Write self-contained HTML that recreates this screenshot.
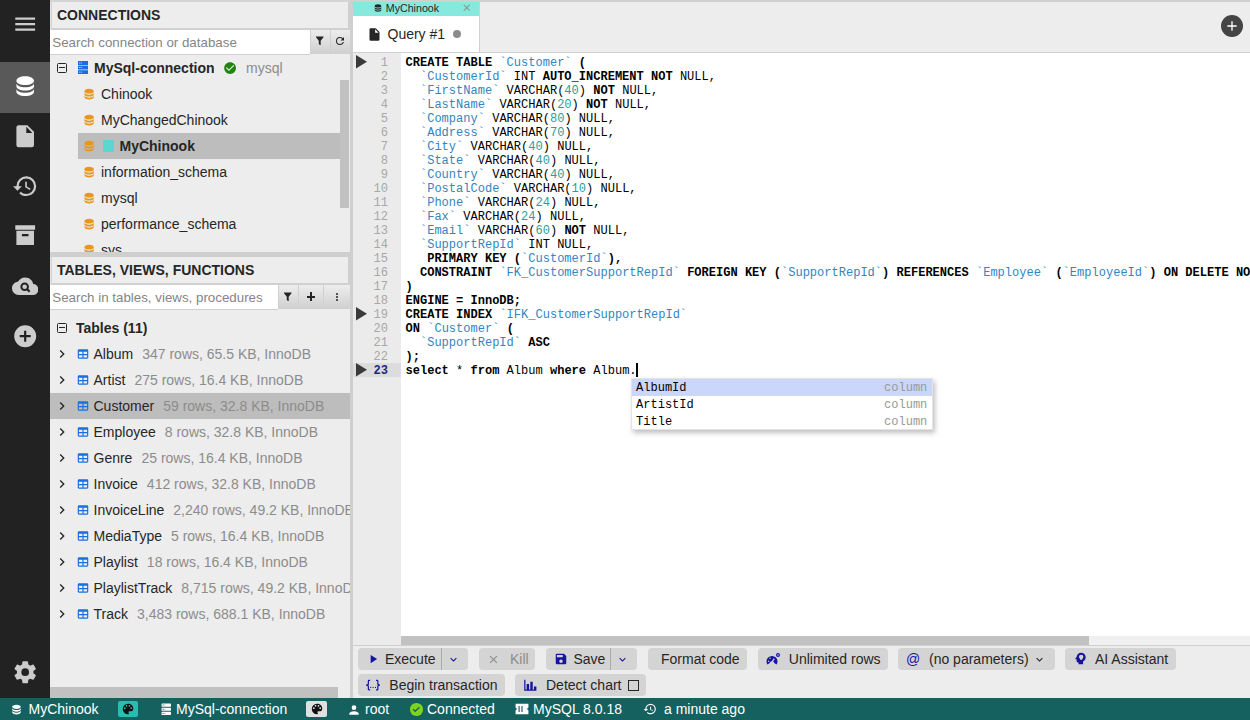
<!DOCTYPE html>
<html><head><meta charset="utf-8"><style>*{box-sizing:border-box}
html,body{margin:0;padding:0}
body{width:1250px;height:720px;overflow:hidden;position:relative;font-family:"Liberation Sans",sans-serif;font-size:14px;color:#262626;background:#ededed}
.abs{position:absolute}
.t{position:absolute;white-space:nowrap;line-height:16px}
.b{font-weight:bold}
.gray{color:#8c8c8c}
.code{position:absolute;font-family:"Liberation Mono",monospace;font-size:12.04px;line-height:14px;white-space:pre;color:#000}
.kw{font-weight:bold;color:#000}
.id{color:#3384c0}
.num{color:#2a9d9d}
.tbtn{position:absolute;height:22px;background:#d4d4d4;border-radius:4px}
</style></head><body>
<div class="abs" style="left:0;top:0;width:50px;height:698px;background:#222">
<div class="abs" style="left:0;top:62px;width:50px;height:50.5px;background:#595959"></div>
<svg class="abs" style="left:11.8px;top:10.6px" width="26.4" height="26.4" viewBox="0 0 24 24"><path fill="#cccccc" d="M3,6H21V8H3V6M3,11H21V13H3V11M3,16H21V18H3V16Z"/></svg>
<svg class="abs" style="left:11.8px;top:72.5px" width="26.4" height="26.4" viewBox="0 0 24 24"><path fill="#fff" d="M12,3C7.58,3 4,4.79 4,7C4,9.21 7.58,11 12,11C16.42,11 20,9.21 20,7C20,4.79 16.42,3 12,3M4,9V12C4,14.21 7.58,16 12,16C16.42,16 20,14.21 20,12V9C20,11.21 16.42,13 12,13C7.58,13 4,11.21 4,9M4,14V17C4,19.21 7.58,21 12,21C16.42,21 20,19.21 20,17V14C20,16.21 16.42,18 12,18C7.58,18 4,16.21 4,14Z"/></svg>
<svg class="abs" style="left:11.8px;top:122.8px" width="26.4" height="26.4" viewBox="0 0 24 24"><path fill="#cccccc" d="M13,9V3.5L18.5,9M6,2C4.89,2 4,2.89 4,4V20A2,2 0 0,0 6,22H18A2,2 0 0,0 20,20V8L14,2H6Z"/></svg>
<svg class="abs" style="left:11.8px;top:172.8px" width="26.4" height="26.4" viewBox="0 0 24 24"><path fill="#cccccc" d="M13.5,8H12V13L16.28,15.54L17,14.33L13.5,12.25V8M13,3A9,9 0 0,0 4,12H1L4.96,16.03L9,12H6A7,7 0 0,1 13,5A7,7 0 0,1 20,12A7,7 0 0,1 13,19C11.07,19 9.32,18.21 8.06,16.94L6.64,18.36C8.27,20 10.5,21 13,21A9,9 0 0,0 22,12A9,9 0 0,0 13,3"/></svg>
<svg class="abs" style="left:11.8px;top:222.2px" width="26.4" height="26.4" viewBox="0 0 24 24"><path fill="#cccccc" d="M3,3H21V7H3V3M4,8H20V21H4V8M9,11V13H15V11H9Z"/></svg>
<svg class="abs" style="left:11.8px;top:272.8px" width="26.4" height="26.4" viewBox="0 0 24 24"><path fill="#cccccc" d="M19.35,10.03C18.67,6.59 15.64,4 12,4C9.11,4 6.6,5.64 5.35,8.03C2.34,8.36 0,10.9 0,14A6,6 0 0,0 6,20H19A5,5 0 0,0 24,15C24,12.36 21.95,10.22 19.35,10.03Z"/><circle cx="11.5" cy="12.5" r="3" fill="none" stroke="#222" stroke-width="1.8"/><path d="M13.6 14.6L16 17" stroke="#222" stroke-width="2"/></svg>
<svg class="abs" style="left:11.8px;top:322.8px" width="26.4" height="26.4" viewBox="0 0 24 24"><path fill="#cccccc" d="M17,13H13V17H11V13H7V11H11V7H13V11H17M12,2A10,10 0 0,0 2,12A10,10 0 0,0 12,22A10,10 0 0,0 22,12A10,10 0 0,0 12,2Z"/></svg>
<svg class="abs" style="left:11.8px;top:658.8px" width="26.4" height="26.4" viewBox="0 0 24 24"><path fill="#cccccc" d="M12,15.5A3.5,3.5 0 0,1 8.5,12A3.5,3.5 0 0,1 12,8.5A3.5,3.5 0 0,1 15.5,12A3.5,3.5 0 0,1 12,15.5M19.43,12.97C19.47,12.65 19.5,12.33 19.5,12C19.5,11.67 19.47,11.34 19.43,11L21.54,9.37C21.73,9.22 21.78,8.95 21.66,8.73L19.66,5.27C19.54,5.05 19.27,4.96 19.05,5.05L16.56,6.05C16.04,5.66 15.5,5.32 14.87,5.07L14.5,2.42C14.46,2.18 14.25,2 14,2H10C9.75,2 9.54,2.18 9.5,2.42L9.13,5.07C8.5,5.32 7.96,5.66 7.44,6.05L4.95,5.05C4.73,4.96 4.46,5.05 4.34,5.27L2.34,8.73C2.21,8.95 2.27,9.22 2.46,9.37L4.57,11C4.53,11.34 4.5,11.67 4.5,12C4.5,12.33 4.53,12.65 4.57,12.97L2.46,14.63C2.27,14.78 2.21,15.05 2.34,15.27L4.34,18.73C4.46,18.95 4.73,19.03 4.95,18.95L7.44,17.94C7.96,18.34 8.5,18.68 9.13,18.93L9.5,21.58C9.54,21.82 9.75,22 10,22H14C14.25,22 14.46,21.82 14.5,21.58L14.87,18.93C15.5,18.67 16.04,18.34 16.56,17.94L19.05,18.95C19.27,19.03 19.54,18.95 19.66,18.73L21.66,15.27C21.78,15.05 21.73,14.78 21.54,14.63L19.43,12.97Z"/></svg>
</div>
<div class="abs" style="left:50px;top:0;width:300px;height:698px;background:#ededed;overflow:hidden">
<div class="abs" style="left:0;top:0;width:300px;height:2px;background:#d4d4d4"></div>
<div class="abs" style="left:0;top:2px;width:1px;height:28px;background:#e4e4e4"></div>
<div class="abs" style="left:1px;top:2px;width:299px;height:28px;background:#ededed;border-left:1px solid #d4d4d4;border-right:2px solid #cfcfcf;border-bottom:2px solid #d0d0d0"></div>
<div class="t b" style="left:7px;top:7.4px;color:#262626">CONNECTIONS</div>
<div class="abs" style="left:0;top:30px;width:260px;height:25px;background:#fff;border-bottom:1px solid #d0d0d0"></div>
<div class="t" style="left:2.299999999999997px;top:35.4px;color:#858585;font-size:13.33px">Search connection or database</div>
<div class="abs" style="left:260px;top:30px;width:20px;height:24px;background:linear-gradient(#ededed,#cfcfcf);border-left:1px solid #d0d0d0"></div>
<div class="abs" style="left:280px;top:30px;width:20px;height:24px;background:linear-gradient(#ededed,#cfcfcf);border-left:1px solid #d0d0d0"></div>
<svg class="abs" style="left:264.4px;top:35.2px" width="11.5" height="11.5" viewBox="0 0 24 24"><path fill="#262626" d="M14,12V19.88C14.04,20.18 13.94,20.5 13.71,20.71C13.32,21.1 12.69,21.1 12.3,20.71L10.29,18.7C10.06,18.47 9.96,18.16 10,17.87V12H9.97L4.21,4.62C3.87,4.19 3.95,3.56 4.38,3.22C4.57,3.08 4.78,3 5,3H19C19.22,3 19.43,3.08 19.62,3.22C20.05,3.56 20.13,4.19 19.79,4.62L14.03,12H14Z"/></svg>
<svg class="abs" style="left:283.8px;top:34.8px" width="12.0" height="12.0" viewBox="0 0 24 24"><path fill="#262626" d="M17.65,6.35C16.2,4.9 14.21,4 12,4A8,8 0 0,0 4,12A8,8 0 0,0 12,20C15.73,20 18.84,17.45 19.73,14H17.65C16.83,16.33 14.61,18 12,18A6,6 0 0,1 6,12A6,6 0 0,1 12,6C13.66,6 15.14,6.69 16.22,7.78L13,11H20V4L17.65,6.35Z"/></svg>
<div class="abs" style="left:7px;top:62.6px;width:10.4px;height:10.4px;border:1.3px solid #262626;border-radius:1.5px"></div><div class="abs" style="left:9.200000000000003px;top:67.2px;width:6px;height:1.3px;background:#262626"></div>
<svg class="abs" style="left:27.900000000000006px;top:61px" width="10.2" height="13.2" viewBox="0 0 10.2 13.2"><rect x="0" y="0" width="10.2" height="4" fill="#1a6fe0"/><rect x="0" y="4.6" width="10.2" height="3.9" fill="#1a6fe0"/><rect x="0" y="9.2" width="10.2" height="4" fill="#1a6fe0"/><rect x="1.2" y="1.5" width="1" height="1" fill="#cde"/><rect x="2.8" y="1.5" width="1" height="1" fill="#cde"/><rect x="1.2" y="6" width="1" height="1" fill="#cde"/><rect x="2.8" y="6" width="1" height="1" fill="#cde"/><rect x="1.2" y="10.7" width="1" height="1" fill="#cde"/><rect x="2.8" y="10.7" width="1" height="1" fill="#cde"/></svg>
<div class="t b" style="left:44px;top:59.6px">MySql-connection</div>
<svg class="abs" style="left:172.8px;top:60.6px" width="14.2" height="14.2" viewBox="0 0 24 24"><path fill="#21850c" d="M12 2C6.5 2 2 6.5 2 12S6.5 22 12 22 22 17.5 22 12 17.5 2 12 2M10 17L5 12L6.41 10.59L10 14.17L17.59 6.58L19 8L10 17Z"/></svg>
<div class="t gray" style="left:196px;top:59.6px">mysql</div>
<div class="abs" style="left:28px;top:133px;width:262px;height:26px;background:#bdbdbd"></div>
<svg class="abs" style="left:32.4px;top:86.8px" width="14.25" height="14.25" viewBox="0 0 24 24"><path fill="#e8961f" d="M12,3C7.58,3 4,4.79 4,7C4,9.21 7.58,11 12,11C16.42,11 20,9.21 20,7C20,4.79 16.42,3 12,3M4,9V12C4,14.21 7.58,16 12,16C16.42,16 20,14.21 20,12V9C20,11.21 16.42,13 12,13C7.58,13 4,11.21 4,9M4,14V17C4,19.21 7.58,21 12,21C16.42,21 20,19.21 20,17V14C20,16.21 16.42,18 12,18C7.58,18 4,16.21 4,14Z"/></svg>
<div class="t" style="left:51px;top:85.6px">Chinook</div>
<svg class="abs" style="left:32.4px;top:112.8px" width="14.25" height="14.25" viewBox="0 0 24 24"><path fill="#e8961f" d="M12,3C7.58,3 4,4.79 4,7C4,9.21 7.58,11 12,11C16.42,11 20,9.21 20,7C20,4.79 16.42,3 12,3M4,9V12C4,14.21 7.58,16 12,16C16.42,16 20,14.21 20,12V9C20,11.21 16.42,13 12,13C7.58,13 4,11.21 4,9M4,14V17C4,19.21 7.58,21 12,21C16.42,21 20,19.21 20,17V14C20,16.21 16.42,18 12,18C7.58,18 4,16.21 4,14Z"/></svg>
<div class="t" style="left:51px;top:111.6px">MyChangedChinook</div>
<svg class="abs" style="left:32.4px;top:138.8px" width="14.25" height="14.25" viewBox="0 0 24 24"><path fill="#e8961f" d="M12,3C7.58,3 4,4.79 4,7C4,9.21 7.58,11 12,11C16.42,11 20,9.21 20,7C20,4.79 16.42,3 12,3M4,9V12C4,14.21 7.58,16 12,16C16.42,16 20,14.21 20,12V9C20,11.21 16.42,13 12,13C7.58,13 4,11.21 4,9M4,14V17C4,19.21 7.58,21 12,21C16.42,21 20,19.21 20,17V14C20,16.21 16.42,18 12,18C7.58,18 4,16.21 4,14Z"/></svg>
<div class="abs" style="left:53px;top:140px;width:11px;height:12px;background:#5ad8cf"></div>
<div class="t b" style="left:69.5px;top:137.6px">MyChinook</div>
<svg class="abs" style="left:32.4px;top:164.8px" width="14.25" height="14.25" viewBox="0 0 24 24"><path fill="#e8961f" d="M12,3C7.58,3 4,4.79 4,7C4,9.21 7.58,11 12,11C16.42,11 20,9.21 20,7C20,4.79 16.42,3 12,3M4,9V12C4,14.21 7.58,16 12,16C16.42,16 20,14.21 20,12V9C20,11.21 16.42,13 12,13C7.58,13 4,11.21 4,9M4,14V17C4,19.21 7.58,21 12,21C16.42,21 20,19.21 20,17V14C20,16.21 16.42,18 12,18C7.58,18 4,16.21 4,14Z"/></svg>
<div class="t" style="left:51px;top:163.6px">information_schema</div>
<svg class="abs" style="left:32.4px;top:190.8px" width="14.25" height="14.25" viewBox="0 0 24 24"><path fill="#e8961f" d="M12,3C7.58,3 4,4.79 4,7C4,9.21 7.58,11 12,11C16.42,11 20,9.21 20,7C20,4.79 16.42,3 12,3M4,9V12C4,14.21 7.58,16 12,16C16.42,16 20,14.21 20,12V9C20,11.21 16.42,13 12,13C7.58,13 4,11.21 4,9M4,14V17C4,19.21 7.58,21 12,21C16.42,21 20,19.21 20,17V14C20,16.21 16.42,18 12,18C7.58,18 4,16.21 4,14Z"/></svg>
<div class="t" style="left:51px;top:189.6px">mysql</div>
<svg class="abs" style="left:32.4px;top:216.8px" width="14.25" height="14.25" viewBox="0 0 24 24"><path fill="#e8961f" d="M12,3C7.58,3 4,4.79 4,7C4,9.21 7.58,11 12,11C16.42,11 20,9.21 20,7C20,4.79 16.42,3 12,3M4,9V12C4,14.21 7.58,16 12,16C16.42,16 20,14.21 20,12V9C20,11.21 16.42,13 12,13C7.58,13 4,11.21 4,9M4,14V17C4,19.21 7.58,21 12,21C16.42,21 20,19.21 20,17V14C20,16.21 16.42,18 12,18C7.58,18 4,16.21 4,14Z"/></svg>
<div class="t" style="left:51px;top:215.6px">performance_schema</div>
<svg class="abs" style="left:32.4px;top:242.8px" width="14.25" height="14.25" viewBox="0 0 24 24"><path fill="#e8961f" d="M12,3C7.58,3 4,4.79 4,7C4,9.21 7.58,11 12,11C16.42,11 20,9.21 20,7C20,4.79 16.42,3 12,3M4,9V12C4,14.21 7.58,16 12,16C16.42,16 20,14.21 20,12V9C20,11.21 16.42,13 12,13C7.58,13 4,11.21 4,9M4,14V17C4,19.21 7.58,21 12,21C16.42,21 20,19.21 20,17V14C20,16.21 16.42,18 12,18C7.58,18 4,16.21 4,14Z"/></svg>
<div class="t" style="left:51px;top:241.6px">sys</div>
<div class="abs" style="left:290px;top:80px;width:9px;height:128px;background:#c1c1c1"></div>
<div class="abs" style="left:0;top:252px;width:300px;height:5px;background:#cfcfcf"></div>
<div class="abs" style="left:0;top:257px;width:1px;height:28px;background:#e4e4e4"></div>
<div class="abs" style="left:1px;top:257px;width:299px;height:28px;background:#ededed;border-left:1px solid #d4d4d4;border-right:2px solid #cfcfcf;border-bottom:2px solid #d0d0d0"></div>
<div class="t b" style="left:7px;top:261.6px">TABLES, VIEWS, FUNCTIONS</div>
<div class="abs" style="left:0;top:285px;width:228px;height:25px;background:#fff;border-bottom:1px solid #d0d0d0"></div>
<div class="t" style="left:2.299999999999997px;top:290.4px;color:#858585;font-size:13.33px">Search in tables, views, procedures</div>
<div class="abs" style="left:228px;top:285px;width:20px;height:24px;background:linear-gradient(#ededed,#cfcfcf);border-left:1px solid #d0d0d0"></div>
<svg class="abs" style="left:232.2px;top:290.8px" width="11.5" height="11.5" viewBox="0 0 24 24"><path fill="#262626" d="M14,12V19.88C14.04,20.18 13.94,20.5 13.71,20.71C13.32,21.1 12.69,21.1 12.3,20.71L10.29,18.7C10.06,18.47 9.96,18.16 10,17.87V12H9.97L4.21,4.62C3.87,4.19 3.95,3.56 4.38,3.22C4.57,3.08 4.78,3 5,3H19C19.22,3 19.43,3.08 19.62,3.22C20.05,3.56 20.13,4.19 19.79,4.62L14.03,12H14Z"/></svg>
<div class="abs" style="left:248px;top:285px;width:25px;height:24px;background:linear-gradient(#ededed,#cfcfcf);border-left:1px solid #d0d0d0"></div>
<div class="abs" style="left:273px;top:285px;width:27px;height:24px;background:linear-gradient(#ededed,#cfcfcf);border-left:1px solid #d0d0d0"></div>
<svg class="abs" style="left:280.5px;top:290.5px" width="12.0" height="12.0" viewBox="0 0 24 24"><path fill="#262626" d="M12,16A2,2 0 0,1 14,18A2,2 0 0,1 12,20A2,2 0 0,1 10,18A2,2 0 0,1 12,16M12,10A2,2 0 0,1 14,12A2,2 0 0,1 12,14A2,2 0 0,1 10,12A2,2 0 0,1 12,10M12,4A2,2 0 0,1 14,6A2,2 0 0,1 12,8A2,2 0 0,1 10,6A2,2 0 0,1 12,4Z"/></svg>
<div class="abs" style="left:256.6px;top:295.7px;width:8.6px;height:2px;background:#262626"></div>
<div class="abs" style="left:259.9px;top:292.4px;width:2px;height:8.6px;background:#262626"></div>
<div class="abs" style="left:7px;top:322.6px;width:10.4px;height:10.4px;border:1.3px solid #262626;border-radius:1.5px"></div><div class="abs" style="left:9.200000000000003px;top:327.2px;width:6px;height:1.3px;background:#262626"></div>
<div class="t b" style="left:26px;top:319.6px">Tables (11)</div>
<div class="abs" style="left:0;top:393px;width:300px;height:26px;background:#bdbdbd"></div>
<svg class="abs" style="left:3.5px;top:346.0px" width="16.0" height="16.0" viewBox="0 0 24 24"><path fill="#262626" d="M8.59,16.58L13.17,12L8.59,7.41L10,6L16,12L10,18L8.59,16.58Z"/></svg>
<svg class="abs" style="left:25.9px;top:346.8px" width="14.0" height="14.0" viewBox="0 0 24 24"><path fill="#1a6fe0" d="M5,4H19A2,2 0 0,1 21,6V18A2,2 0 0,1 19,20H5A2,2 0 0,1 3,18V6A2,2 0 0,1 5,4M5,8V12H11V8H5M13,8V12H19V8H13M5,14V18H11V14H5M13,14V18H19V14H13Z"/></svg>
<div class="t" style="left:43.5px;top:345.6px">Album<span class="gray" style="margin-left:9px">347 rows, 65.5 KB, InnoDB</span></div>
<svg class="abs" style="left:3.5px;top:372.0px" width="16.0" height="16.0" viewBox="0 0 24 24"><path fill="#262626" d="M8.59,16.58L13.17,12L8.59,7.41L10,6L16,12L10,18L8.59,16.58Z"/></svg>
<svg class="abs" style="left:25.9px;top:372.8px" width="14.0" height="14.0" viewBox="0 0 24 24"><path fill="#1a6fe0" d="M5,4H19A2,2 0 0,1 21,6V18A2,2 0 0,1 19,20H5A2,2 0 0,1 3,18V6A2,2 0 0,1 5,4M5,8V12H11V8H5M13,8V12H19V8H13M5,14V18H11V14H5M13,14V18H19V14H13Z"/></svg>
<div class="t" style="left:43.5px;top:371.6px">Artist<span class="gray" style="margin-left:9px">275 rows, 16.4 KB, InnoDB</span></div>
<svg class="abs" style="left:3.5px;top:398.0px" width="16.0" height="16.0" viewBox="0 0 24 24"><path fill="#262626" d="M8.59,16.58L13.17,12L8.59,7.41L10,6L16,12L10,18L8.59,16.58Z"/></svg>
<svg class="abs" style="left:25.9px;top:398.8px" width="14.0" height="14.0" viewBox="0 0 24 24"><path fill="#1a6fe0" d="M5,4H19A2,2 0 0,1 21,6V18A2,2 0 0,1 19,20H5A2,2 0 0,1 3,18V6A2,2 0 0,1 5,4M5,8V12H11V8H5M13,8V12H19V8H13M5,14V18H11V14H5M13,14V18H19V14H13Z"/></svg>
<div class="t" style="left:43.5px;top:397.6px">Customer<span class="gray" style="margin-left:9px">59 rows, 32.8 KB, InnoDB</span></div>
<svg class="abs" style="left:3.5px;top:424.0px" width="16.0" height="16.0" viewBox="0 0 24 24"><path fill="#262626" d="M8.59,16.58L13.17,12L8.59,7.41L10,6L16,12L10,18L8.59,16.58Z"/></svg>
<svg class="abs" style="left:25.9px;top:424.8px" width="14.0" height="14.0" viewBox="0 0 24 24"><path fill="#1a6fe0" d="M5,4H19A2,2 0 0,1 21,6V18A2,2 0 0,1 19,20H5A2,2 0 0,1 3,18V6A2,2 0 0,1 5,4M5,8V12H11V8H5M13,8V12H19V8H13M5,14V18H11V14H5M13,14V18H19V14H13Z"/></svg>
<div class="t" style="left:43.5px;top:423.6px">Employee<span class="gray" style="margin-left:9px">8 rows, 32.8 KB, InnoDB</span></div>
<svg class="abs" style="left:3.5px;top:450.0px" width="16.0" height="16.0" viewBox="0 0 24 24"><path fill="#262626" d="M8.59,16.58L13.17,12L8.59,7.41L10,6L16,12L10,18L8.59,16.58Z"/></svg>
<svg class="abs" style="left:25.9px;top:450.8px" width="14.0" height="14.0" viewBox="0 0 24 24"><path fill="#1a6fe0" d="M5,4H19A2,2 0 0,1 21,6V18A2,2 0 0,1 19,20H5A2,2 0 0,1 3,18V6A2,2 0 0,1 5,4M5,8V12H11V8H5M13,8V12H19V8H13M5,14V18H11V14H5M13,14V18H19V14H13Z"/></svg>
<div class="t" style="left:43.5px;top:449.6px">Genre<span class="gray" style="margin-left:9px">25 rows, 16.4 KB, InnoDB</span></div>
<svg class="abs" style="left:3.5px;top:476.0px" width="16.0" height="16.0" viewBox="0 0 24 24"><path fill="#262626" d="M8.59,16.58L13.17,12L8.59,7.41L10,6L16,12L10,18L8.59,16.58Z"/></svg>
<svg class="abs" style="left:25.9px;top:476.8px" width="14.0" height="14.0" viewBox="0 0 24 24"><path fill="#1a6fe0" d="M5,4H19A2,2 0 0,1 21,6V18A2,2 0 0,1 19,20H5A2,2 0 0,1 3,18V6A2,2 0 0,1 5,4M5,8V12H11V8H5M13,8V12H19V8H13M5,14V18H11V14H5M13,14V18H19V14H13Z"/></svg>
<div class="t" style="left:43.5px;top:475.6px">Invoice<span class="gray" style="margin-left:9px">412 rows, 32.8 KB, InnoDB</span></div>
<svg class="abs" style="left:3.5px;top:502.0px" width="16.0" height="16.0" viewBox="0 0 24 24"><path fill="#262626" d="M8.59,16.58L13.17,12L8.59,7.41L10,6L16,12L10,18L8.59,16.58Z"/></svg>
<svg class="abs" style="left:25.9px;top:502.8px" width="14.0" height="14.0" viewBox="0 0 24 24"><path fill="#1a6fe0" d="M5,4H19A2,2 0 0,1 21,6V18A2,2 0 0,1 19,20H5A2,2 0 0,1 3,18V6A2,2 0 0,1 5,4M5,8V12H11V8H5M13,8V12H19V8H13M5,14V18H11V14H5M13,14V18H19V14H13Z"/></svg>
<div class="t" style="left:43.5px;top:501.6px">InvoiceLine<span class="gray" style="margin-left:9px">2,240 rows, 49.2 KB, InnoDB</span></div>
<svg class="abs" style="left:3.5px;top:528.0px" width="16.0" height="16.0" viewBox="0 0 24 24"><path fill="#262626" d="M8.59,16.58L13.17,12L8.59,7.41L10,6L16,12L10,18L8.59,16.58Z"/></svg>
<svg class="abs" style="left:25.9px;top:528.8px" width="14.0" height="14.0" viewBox="0 0 24 24"><path fill="#1a6fe0" d="M5,4H19A2,2 0 0,1 21,6V18A2,2 0 0,1 19,20H5A2,2 0 0,1 3,18V6A2,2 0 0,1 5,4M5,8V12H11V8H5M13,8V12H19V8H13M5,14V18H11V14H5M13,14V18H19V14H13Z"/></svg>
<div class="t" style="left:43.5px;top:527.6px">MediaType<span class="gray" style="margin-left:9px">5 rows, 16.4 KB, InnoDB</span></div>
<svg class="abs" style="left:3.5px;top:554.0px" width="16.0" height="16.0" viewBox="0 0 24 24"><path fill="#262626" d="M8.59,16.58L13.17,12L8.59,7.41L10,6L16,12L10,18L8.59,16.58Z"/></svg>
<svg class="abs" style="left:25.9px;top:554.8px" width="14.0" height="14.0" viewBox="0 0 24 24"><path fill="#1a6fe0" d="M5,4H19A2,2 0 0,1 21,6V18A2,2 0 0,1 19,20H5A2,2 0 0,1 3,18V6A2,2 0 0,1 5,4M5,8V12H11V8H5M13,8V12H19V8H13M5,14V18H11V14H5M13,14V18H19V14H13Z"/></svg>
<div class="t" style="left:43.5px;top:553.6px">Playlist<span class="gray" style="margin-left:9px">18 rows, 16.4 KB, InnoDB</span></div>
<svg class="abs" style="left:3.5px;top:580.0px" width="16.0" height="16.0" viewBox="0 0 24 24"><path fill="#262626" d="M8.59,16.58L13.17,12L8.59,7.41L10,6L16,12L10,18L8.59,16.58Z"/></svg>
<svg class="abs" style="left:25.9px;top:580.8px" width="14.0" height="14.0" viewBox="0 0 24 24"><path fill="#1a6fe0" d="M5,4H19A2,2 0 0,1 21,6V18A2,2 0 0,1 19,20H5A2,2 0 0,1 3,18V6A2,2 0 0,1 5,4M5,8V12H11V8H5M13,8V12H19V8H13M5,14V18H11V14H5M13,14V18H19V14H13Z"/></svg>
<div class="t" style="left:43.5px;top:579.6px">PlaylistTrack<span class="gray" style="margin-left:9px">8,715 rows, 49.2 KB, InnoDB</span></div>
<svg class="abs" style="left:3.5px;top:606.0px" width="16.0" height="16.0" viewBox="0 0 24 24"><path fill="#262626" d="M8.59,16.58L13.17,12L8.59,7.41L10,6L16,12L10,18L8.59,16.58Z"/></svg>
<svg class="abs" style="left:25.9px;top:606.8px" width="14.0" height="14.0" viewBox="0 0 24 24"><path fill="#1a6fe0" d="M5,4H19A2,2 0 0,1 21,6V18A2,2 0 0,1 19,20H5A2,2 0 0,1 3,18V6A2,2 0 0,1 5,4M5,8V12H11V8H5M13,8V12H19V8H13M5,14V18H11V14H5M13,14V18H19V14H13Z"/></svg>
<div class="t" style="left:43.5px;top:605.6px">Track<span class="gray" style="margin-left:9px">3,483 rows, 688.1 KB, InnoDB</span></div>
<div class="abs" style="left:0;top:687px;width:288px;height:11px;background:#c1c1c1"></div>
</div>
<div class="abs" style="left:350px;top:0;width:3px;height:698px;background:#cfcfcf"></div>
<div class="abs" style="left:353px;top:0;width:897px;height:53px;background:#ededed"></div>
<div class="abs" style="left:353px;top:0;width:897px;height:1.5px;background:#d0d0d0"></div>
<div class="abs" style="left:353px;top:2px;width:126px;height:14px;background:#87e8de"></div>
<svg class="abs" style="left:372.5px;top:3.0px" width="10.0" height="10.0" viewBox="0 0 24 24"><path fill="#262626" d="M12,3C7.58,3 4,4.79 4,7C4,9.21 7.58,11 12,11C16.42,11 20,9.21 20,7C20,4.79 16.42,3 12,3M4,9V12C4,14.21 7.58,16 12,16C16.42,16 20,14.21 20,12V9C20,11.21 16.42,13 12,13C7.58,13 4,11.21 4,9M4,14V17C4,19.21 7.58,21 12,21C16.42,21 20,19.21 20,17V14C20,16.21 16.42,18 12,18C7.58,18 4,16.21 4,14Z"/></svg>
<div class="t" style="left:385.8px;top:1px;font-size:10.67px;line-height:14px">MyChinook</div>
<svg class="abs" style="left:461.3px;top:1.9px" width="11.5" height="11.5" viewBox="0 0 24 24"><path fill="#8c8c8c" d="M19,6.41L17.59,5L12,10.59L6.41,5L5,6.41L10.59,12L5,17.59L6.41,19L12,13.41L17.59,19L19,17.59L13.41,12L19,6.41Z"/></svg>
<div class="abs" style="left:353px;top:16px;width:126px;height:36px;background:#fff"></div>
<div class="abs" style="left:479px;top:2px;width:1px;height:50px;background:#d0d0d0"></div>
<svg class="abs" style="left:367.0px;top:27.0px" width="15.0" height="15.0" viewBox="0 0 24 24"><path fill="#262626" d="M13,9V3.5L18.5,9M6,2C4.89,2 4,2.89 4,4V20A2,2 0 0,0 6,22H18A2,2 0 0,0 20,20V8L14,2H6Z"/></svg>
<div class="t" style="left:387.5px;top:25.5px">Query #1</div>
<div class="abs" style="left:452.5px;top:29.8px;width:8.5px;height:8.5px;border-radius:50%;background:#8c8c8c"></div>
<div class="abs" style="left:1221px;top:15px;width:22px;height:22px;border-radius:50%;background:#444"></div>
<svg class="abs" style="left:1224.0px;top:18.0px" width="16.0" height="16.0" viewBox="0 0 24 24"><path fill="#fff" d="M19,13H13V19H11V13H5V11H11V5H13V11H19V13Z"/></svg>
<div class="abs" style="left:353px;top:52px;width:897px;height:1px;background:#d0d0d0"></div>
<div class="abs" style="left:353px;top:53px;width:897px;height:592px;background:#fff"></div>
<div class="abs" style="left:353px;top:53px;width:48px;height:592px;background:#ebebeb"></div>
<div class="abs" style="left:353px;top:362.9px;width:48px;height:14px;background:#dcdcdc"></div>
<svg class="abs" style="left:356px;top:55.0px" width="12" height="14" viewBox="0 0 12 14"><path d="M0,0L11,6.8L0,13.6Z" fill="#3a3a3a"/></svg>
<svg class="abs" style="left:356px;top:307.0px" width="12" height="14" viewBox="0 0 12 14"><path d="M0,0L11,6.8L0,13.6Z" fill="#3a3a3a"/></svg>
<svg class="abs" style="left:356px;top:363.0px" width="12" height="14" viewBox="0 0 12 14"><path d="M0,0L11,6.8L0,13.6Z" fill="#3a3a3a"/></svg>
<div class="code" style="left:360px;top:55.9px;width:28px;text-align:right;color:#a8a8a8">1</div>
<div class="code" style="left:360px;top:69.9px;width:28px;text-align:right;color:#a8a8a8">2</div>
<div class="code" style="left:360px;top:83.9px;width:28px;text-align:right;color:#a8a8a8">3</div>
<div class="code" style="left:360px;top:97.9px;width:28px;text-align:right;color:#a8a8a8">4</div>
<div class="code" style="left:360px;top:111.9px;width:28px;text-align:right;color:#a8a8a8">5</div>
<div class="code" style="left:360px;top:125.9px;width:28px;text-align:right;color:#a8a8a8">6</div>
<div class="code" style="left:360px;top:139.9px;width:28px;text-align:right;color:#a8a8a8">7</div>
<div class="code" style="left:360px;top:153.9px;width:28px;text-align:right;color:#a8a8a8">8</div>
<div class="code" style="left:360px;top:167.9px;width:28px;text-align:right;color:#a8a8a8">9</div>
<div class="code" style="left:360px;top:181.9px;width:28px;text-align:right;color:#a8a8a8">10</div>
<div class="code" style="left:360px;top:195.9px;width:28px;text-align:right;color:#a8a8a8">11</div>
<div class="code" style="left:360px;top:209.9px;width:28px;text-align:right;color:#a8a8a8">12</div>
<div class="code" style="left:360px;top:223.9px;width:28px;text-align:right;color:#a8a8a8">13</div>
<div class="code" style="left:360px;top:237.9px;width:28px;text-align:right;color:#a8a8a8">14</div>
<div class="code" style="left:360px;top:251.9px;width:28px;text-align:right;color:#a8a8a8">15</div>
<div class="code" style="left:360px;top:265.9px;width:28px;text-align:right;color:#a8a8a8">16</div>
<div class="code" style="left:360px;top:279.9px;width:28px;text-align:right;color:#a8a8a8">17</div>
<div class="code" style="left:360px;top:293.9px;width:28px;text-align:right;color:#a8a8a8">18</div>
<div class="code" style="left:360px;top:307.9px;width:28px;text-align:right;color:#a8a8a8">19</div>
<div class="code" style="left:360px;top:321.9px;width:28px;text-align:right;color:#a8a8a8">20</div>
<div class="code" style="left:360px;top:335.9px;width:28px;text-align:right;color:#a8a8a8">21</div>
<div class="code" style="left:360px;top:349.9px;width:28px;text-align:right;color:#a8a8a8">22</div>
<div class="code" style="left:360px;top:363.9px;width:28px;text-align:right;color:#1c2a80;font-weight:bold">23</div>
<div class="abs" style="left:401px;top:53px;width:849px;height:583px;overflow:hidden">
<div class="code" style="left:4.5px;top:2.8999999999999986px"><span class="kw">CREATE TABLE</span> <span class="id">`Customer`</span> <span class="kw">(</span></div>
<div class="code" style="left:4.5px;top:16.9px">  <span class="id">`CustomerId`</span> INT <span class="kw">AUTO_INCREMENT NOT</span> NULL,</div>
<div class="code" style="left:4.5px;top:30.9px">  <span class="id">`FirstName`</span> VARCHAR(<span class="num">40</span>) <span class="kw">NOT</span> NULL,</div>
<div class="code" style="left:4.5px;top:44.9px">  <span class="id">`LastName`</span> VARCHAR(<span class="num">20</span>) <span class="kw">NOT</span> NULL,</div>
<div class="code" style="left:4.5px;top:58.9px">  <span class="id">`Company`</span> VARCHAR(<span class="num">80</span>) NULL,</div>
<div class="code" style="left:4.5px;top:72.9px">  <span class="id">`Address`</span> VARCHAR(<span class="num">70</span>) NULL,</div>
<div class="code" style="left:4.5px;top:86.9px">  <span class="id">`City`</span> VARCHAR(<span class="num">40</span>) NULL,</div>
<div class="code" style="left:4.5px;top:100.9px">  <span class="id">`State`</span> VARCHAR(<span class="num">40</span>) NULL,</div>
<div class="code" style="left:4.5px;top:114.9px">  <span class="id">`Country`</span> VARCHAR(<span class="num">40</span>) NULL,</div>
<div class="code" style="left:4.5px;top:128.9px">  <span class="id">`PostalCode`</span> VARCHAR(<span class="num">10</span>) NULL,</div>
<div class="code" style="left:4.5px;top:142.9px">  <span class="id">`Phone`</span> VARCHAR(<span class="num">24</span>) NULL,</div>
<div class="code" style="left:4.5px;top:156.9px">  <span class="id">`Fax`</span> VARCHAR(<span class="num">24</span>) NULL,</div>
<div class="code" style="left:4.5px;top:170.9px">  <span class="id">`Email`</span> VARCHAR(<span class="num">60</span>) <span class="kw">NOT</span> NULL,</div>
<div class="code" style="left:4.5px;top:184.9px">  <span class="id">`SupportRepId`</span> INT NULL,</div>
<div class="code" style="left:4.5px;top:198.9px">   <span class="kw">PRIMARY KEY (</span><span class="id">`CustomerId`</span><span class="kw">),</span></div>
<div class="code" style="left:4.5px;top:212.9px">  <span class="kw">CONSTRAINT</span> <span class="id">`FK_CustomerSupportRepId`</span> <span class="kw">FOREIGN KEY (</span><span class="id">`SupportRepId`</span><span class="kw">) REFERENCES</span> <span class="id">`Employee`</span> <span class="kw">(</span><span class="id">`EmployeeId`</span><span class="kw">) ON DELETE NO ACTION ON UPDATE NO ACTION</span></div>
<div class="code" style="left:4.5px;top:226.9px"><span class="kw">)</span></div>
<div class="code" style="left:4.5px;top:240.9px"><span class="kw">ENGINE = InnoDB;</span></div>
<div class="code" style="left:4.5px;top:254.9px"><span class="kw">CREATE INDEX</span> <span class="id">`IFK_CustomerSupportRepId`</span></div>
<div class="code" style="left:4.5px;top:268.9px"><span class="kw">ON</span> <span class="id">`Customer`</span> <span class="kw">(</span></div>
<div class="code" style="left:4.5px;top:282.9px">  <span class="id">`SupportRepId`</span> <span class="kw">ASC</span></div>
<div class="code" style="left:4.5px;top:296.9px"><span class="kw">);</span></div>
<div class="code" style="left:4.5px;top:310.9px"><span class="kw">select</span> * <span class="kw">from</span> Album <span class="kw">where</span> Album.</div>
</div>
<div class="abs" style="left:636px;top:363px;width:2px;height:14px;background:#000"></div>
<div class="abs" style="left:631px;top:378px;width:302px;height:52px;background:#fff;border:1px solid #e4e4e4;box-shadow:2px 3px 5px rgba(0,0,0,0.25)"></div>
<div class="abs" style="left:632px;top:379px;width:300px;height:16.5px;background:#cad6fa"></div>
<div class="code" style="left:636px;top:381px;color:#000">AlbumId</div>
<div class="code" style="left:884px;top:381px;color:#999">column</div>
<div class="code" style="left:636px;top:398px;color:#000">ArtistId</div>
<div class="code" style="left:884px;top:398px;color:#999">column</div>
<div class="code" style="left:636px;top:415px;color:#000">Title</div>
<div class="code" style="left:884px;top:415px;color:#999">column</div>
<div class="abs" style="left:401px;top:636px;width:849px;height:9px;background:#f0f0f0"></div>
<div class="abs" style="left:401px;top:636px;width:688px;height:9px;background:#c1c1c1"></div>
<div class="abs" style="left:353px;top:645px;width:897px;height:1px;background:#cfcfcf"></div>
<div class="tbtn" style="left:357.6px;top:648px;width:110.89999999999998px;height:22px;background:#d4d4d4;"></div>
<div class="abs" style="left:441px;top:648px;width:1px;height:22px;background:#aaa"></div>
<svg class="abs" style="left:366.0px;top:652.0px" width="14.0" height="14.0" viewBox="0 0 24 24"><path fill="#1414a0" d="M8,5.14V19.14L19,12.14L8,5.14Z"/></svg>
<div class="t" style="left:385px;top:651px;color:#262626">Execute</div>
<svg class="abs" style="left:447.0px;top:652.5px" width="13.0" height="13.0" viewBox="0 0 24 24"><path fill="#1414a0" d="M7.41,8.58L12,13.17L16.59,8.58L18,10L12,16L6,10L7.41,8.58Z"/></svg>
<div class="tbtn" style="left:479px;top:648px;width:56.39999999999998px;height:22px;background:#d4d4d4;"></div>
<svg class="abs" style="left:486.5px;top:652.5px" width="13.0" height="13.0" viewBox="0 0 24 24"><path fill="#8c8c8c" d="M19,6.41L17.59,5L12,10.59L6.41,5L5,6.41L10.59,12L5,17.59L6.41,19L12,13.41L17.59,19L19,17.59L13.41,12L19,6.41Z"/></svg>
<div class="t" style="left:510px;top:651px;color:#8c8c8c">Kill</div>
<div class="tbtn" style="left:546px;top:648px;width:91px;height:22px;background:#d4d4d4;"></div>
<div class="abs" style="left:610px;top:648px;width:1px;height:22px;background:#aaa"></div>
<svg class="abs" style="left:553.5px;top:652.0px" width="14.0" height="14.0" viewBox="0 0 24 24"><path fill="#1414a0" d="M15,9H5V5H15M12,19A3,3 0 0,1 9,16A3,3 0 0,1 12,13A3,3 0 0,1 15,16A3,3 0 0,1 12,19M17,3H5C3.89,3 3,3.9 3,5V19A2,2 0 0,0 5,21H19A2,2 0 0,0 21,19V7L17,3Z"/></svg>
<div class="t" style="left:573.5px;top:651px;color:#262626">Save</div>
<svg class="abs" style="left:616.0px;top:652.5px" width="13.0" height="13.0" viewBox="0 0 24 24"><path fill="#1414a0" d="M7.41,8.58L12,13.17L16.59,8.58L18,10L12,16L6,10L7.41,8.58Z"/></svg>
<div class="tbtn" style="left:648px;top:648px;width:99.39999999999998px;height:22px;background:#d4d4d4;"></div>
<div class="t" style="left:661px;top:651px;color:#262626">Format code</div>
<div class="tbtn" style="left:758px;top:648px;width:130px;height:22px;background:#d4d4d4;"></div>
<svg class="abs" style="left:766px;top:653.0px" width="14" height="12" viewBox="0 0 14 12"><path fill="#1414a0" d="M0.5,8.5A5.5,5.5 0 0,1 11.5,8.5C11.5,9.6 11.2,10.6 10.6,11.4L8.6,10.2A2.7,2.7 0 0,0 3.4,10.2L1.4,11.4C0.8,10.6 0.5,9.6 0.5,8.5Z"/><path d="M6,9.2L8.2,5.6" stroke="#d4d4d4" stroke-width="1.3"/><circle cx="2.6" cy="8.2" r="0.7" fill="#d4d4d4"/><circle cx="4" cy="5.2" r="0.7" fill="#d4d4d4"/><circle cx="12" cy="2" r="1.4" fill="none" stroke="#1414a0" stroke-width="1.2"/></svg>
<div class="t" style="left:788.8px;top:651px;color:#262626">Unlimited rows</div>
<div class="tbtn" style="left:898px;top:648px;width:156.79999999999995px;height:22px;background:#d4d4d4;"></div>
<div class="t" style="left:906px;top:651px;color:#1414a0">@</div>
<div class="t" style="left:929px;top:651px;color:#262626">(no parameters)</div>
<svg class="abs" style="left:1033.0px;top:652.5px" width="13.0" height="13.0" viewBox="0 0 24 24"><path fill="#262626" d="M7.41,8.58L12,13.17L16.59,8.58L18,10L12,16L6,10L7.41,8.58Z"/></svg>
<div class="tbtn" style="left:1065.2px;top:648px;width:110.59999999999991px;height:22px;background:#d4d4d4;"></div>
<svg class="abs" style="left:1073.5px;top:652.3px" width="13" height="13" viewBox="3 2 18 20"><path fill="#1414a0" d="M13,3C9.23,3 6.19,5.95 6,9.66L4.08,12.19C3.84,12.5 4.08,13 4.5,13H6V16A2,2 0 0,0 8,18H9V21H16V16.31C18.37,15.19 20,12.8 20,10C20,6.14 16.88,3 13,3Z"/><path fill="#d4d4d4" d="M13,6.2A3.4,3.4 0 0,0 9.6,9.6C9.6,10.9 10.3,11.9 11.3,12.5V14H14.7V12.5C15.7,11.9 16.4,10.9 16.4,9.6A3.4,3.4 0 0,0 13,6.2Z"/></svg>
<div class="t" style="left:1095px;top:651px;color:#262626">AI Assistant</div>
<div class="tbtn" style="left:357.6px;top:674px;width:147.0px;height:22px;background:#d4d4d4;"></div>
<svg class="abs" style="left:365.8px;top:677.9px" width="14.2" height="14.2" viewBox="0 0 24 24"><path fill="#1414a0" d="M5,3H7V5H5V10A2,2 0 0,1 3,12A2,2 0 0,1 5,14V19H7V21H5C3.93,20.73 3,20.1 3,19V15A2,2 0 0,0 1,13H0V11H1A2,2 0 0,0 3,9V5A2,2 0 0,1 5,3M19,3A2,2 0 0,1 21,5V9A2,2 0 0,0 23,11H24V13H23A2,2 0 0,0 21,15V19A2,2 0 0,1 19,21H17V19H19V14A2,2 0 0,1 21,12A2,2 0 0,1 19,10V5H17V3H19M12,15A1,1 0 0,1 13,16A1,1 0 0,1 12,17A1,1 0 0,1 11,16A1,1 0 0,1 12,15M8,15A1,1 0 0,1 9,16A1,1 0 0,1 8,17A1,1 0 0,1 7,16A1,1 0 0,1 8,15M16,15A1,1 0 0,1 17,16A1,1 0 0,1 16,17A1,1 0 0,1 15,16A1,1 0 0,1 16,15Z"/></svg>
<div class="t" style="left:389.3px;top:677px;color:#262626">Begin transaction</div>
<div class="tbtn" style="left:515.4px;top:674px;width:130.60000000000002px;height:22px;background:#d4d4d4;"></div>
<svg class="abs" style="left:522.5px;top:677.7px" width="14.6" height="14.6" viewBox="0 0 24 24"><path fill="#1414a0" d="M22,21H2V3H4V19H6V10H10V19H12V6H16V19H18V14H22V21Z"/></svg>
<div class="t" style="left:546px;top:677px;color:#262626">Detect chart</div>
<div class="abs" style="left:627.5px;top:680px;width:11px;height:10.5px;border:1.3px solid #262626;background:transparent"></div>
<div class="abs" style="left:0;top:698px;width:1250px;height:22px;background:#146160"></div>
<svg class="abs" style="left:10.0px;top:702.5px" width="13.0" height="13.0" viewBox="0 0 24 24"><path fill="#fff" d="M12,3C7.58,3 4,4.79 4,7C4,9.21 7.58,11 12,11C16.42,11 20,9.21 20,7C20,4.79 16.42,3 12,3M4,9V12C4,14.21 7.58,16 12,16C16.42,16 20,14.21 20,12V9C20,11.21 16.42,13 12,13C7.58,13 4,11.21 4,9M4,14V17C4,19.21 7.58,21 12,21C16.42,21 20,19.21 20,17V14C20,16.21 16.42,18 12,18C7.58,18 4,16.21 4,14Z"/></svg>
<div class="t" style="left:28.5px;top:701px;color:#fff">MyChinook</div>
<div class="abs" style="left:118px;top:701px;width:20px;height:16px;border-radius:2px;background:#2bbcb0"></div>
<svg class="abs" style="left:121.0px;top:702.0px" width="14.0" height="14.0" viewBox="0 0 24 24"><path fill="#111" d="M17.5,12A1.5,1.5 0 0,1 16,10.5A1.5,1.5 0 0,1 17.5,9A1.5,1.5 0 0,1 19,10.5A1.5,1.5 0 0,1 17.5,12M14.5,8A1.5,1.5 0 0,1 13,6.5A1.5,1.5 0 0,1 14.5,5A1.5,1.5 0 0,1 16,6.5A1.5,1.5 0 0,1 14.5,8M9.5,8A1.5,1.5 0 0,1 8,6.5A1.5,1.5 0 0,1 9.5,5A1.5,1.5 0 0,1 11,6.5A1.5,1.5 0 0,1 9.5,8M6.5,12A1.5,1.5 0 0,1 5,10.5A1.5,1.5 0 0,1 6.5,9A1.5,1.5 0 0,1 8,10.5A1.5,1.5 0 0,1 6.5,12M12,3A9,9 0 0,0 3,12A9,9 0 0,0 12,21A1.5,1.5 0 0,0 13.5,19.5C13.5,19.11 13.35,18.76 13.11,18.5C12.88,18.23 12.73,17.88 12.73,17.5A1.5,1.5 0 0,1 14.23,16H16A5,5 0 0,0 21,11C21,6.58 16.97,3 12,3Z"/></svg>
<svg class="abs" style="left:159.5px;top:702.5px" width="12.5" height="12.5" viewBox="0 0 24 24"><path fill="#fff" d="M4,1H20A1,1 0 0,1 21,2V6A1,1 0 0,1 20,7H4A1,1 0 0,1 3,6V2A1,1 0 0,1 4,1M4,9H20A1,1 0 0,1 21,10V14A1,1 0 0,1 20,15H4A1,1 0 0,1 3,14V10A1,1 0 0,1 4,9M4,17H20A1,1 0 0,1 21,18V22A1,1 0 0,1 20,23H4A1,1 0 0,1 3,22V18A1,1 0 0,1 4,17M9,5H10V3H9V5M9,13H10V11H9V13M9,21H10V19H9V21M5,3V5H7V3H5M5,11V13H7V11H5M5,19V21H7V19H5Z"/></svg>
<div class="t" style="left:176px;top:701px;color:#fff">MySql-connection</div>
<div class="abs" style="left:306px;top:701px;width:21px;height:16px;border-radius:2px;background:#e0e0e0"></div>
<svg class="abs" style="left:309.5px;top:702.0px" width="14.0" height="14.0" viewBox="0 0 24 24"><path fill="#111" d="M17.5,12A1.5,1.5 0 0,1 16,10.5A1.5,1.5 0 0,1 17.5,9A1.5,1.5 0 0,1 19,10.5A1.5,1.5 0 0,1 17.5,12M14.5,8A1.5,1.5 0 0,1 13,6.5A1.5,1.5 0 0,1 14.5,5A1.5,1.5 0 0,1 16,6.5A1.5,1.5 0 0,1 14.5,8M9.5,8A1.5,1.5 0 0,1 8,6.5A1.5,1.5 0 0,1 9.5,5A1.5,1.5 0 0,1 11,6.5A1.5,1.5 0 0,1 9.5,8M6.5,12A1.5,1.5 0 0,1 5,10.5A1.5,1.5 0 0,1 6.5,9A1.5,1.5 0 0,1 8,10.5A1.5,1.5 0 0,1 6.5,12M12,3A9,9 0 0,0 3,12A9,9 0 0,0 12,21A1.5,1.5 0 0,0 13.5,19.5C13.5,19.11 13.35,18.76 13.11,18.5C12.88,18.23 12.73,17.88 12.73,17.5A1.5,1.5 0 0,1 14.23,16H16A5,5 0 0,0 21,11C21,6.58 16.97,3 12,3Z"/></svg>
<svg class="abs" style="left:347.0px;top:702.5px" width="14.0" height="14.0" viewBox="0 0 24 24"><path fill="#fff" d="M12,4A4,4 0 0,1 16,8A4,4 0 0,1 12,12A4,4 0 0,1 8,8A4,4 0 0,1 12,4M12,14C16.42,14 20,15.79 20,18V20H4V18C4,15.79 7.58,14 12,14Z"/></svg>
<div class="t" style="left:365px;top:701px;color:#fff">root</div>
<div class="abs" style="left:410px;top:703px;width:12.5px;height:12.5px;border-radius:50%;background:#7ed321"></div>
<svg class="abs" style="left:411.0px;top:704.0px" width="0.0" height="0.0" viewBox="0 0 24 24"><path fill="#fff" d="M8.59,16.58L13.17,12L8.59,7.41L10,6L16,12L10,18L8.59,16.58Z"/></svg>
<svg class="abs" style="left:410px;top:703px" width="12.5" height="12.5" viewBox="0 0 24 24"><path d="M6,12L10,16L18,8" fill="none" stroke="#146160" stroke-width="2.6"/></svg>
<div class="t" style="left:427px;top:701px;color:#fff">Connected</div>
<svg class="abs" style="left:515px;top:703px" width="14" height="12" viewBox="0 0 24 20"><path fill="#fff" d="M1,1H23V8A2,2 0 0,0 23,12V19H1V12A2,2 0 0,0 1,8Z"/><path d="M7,5V15M12,5V15" stroke="#146160" stroke-width="2"/></svg>
<div class="t" style="left:533px;top:701px;color:#fff">MySQL 8.0.18</div>
<svg class="abs" style="left:642.5px;top:702.0px" width="14.0" height="14.0" viewBox="0 0 24 24"><path fill="#fff" d="M13.5,8H12V13L16.28,15.54L17,14.33L13.5,12.25V8M13,3A9,9 0 0,0 4,12H1L4.96,16.03L9,12H6A7,7 0 0,1 13,5A7,7 0 0,1 20,12A7,7 0 0,1 13,19C11.07,19 9.32,18.21 8.06,16.94L6.64,18.36C8.27,20 10.5,21 13,21A9,9 0 0,0 22,12A9,9 0 0,0 13,3"/></svg>
<div class="t" style="left:664px;top:701px;color:#fff">a minute ago</div>
</body></html>
